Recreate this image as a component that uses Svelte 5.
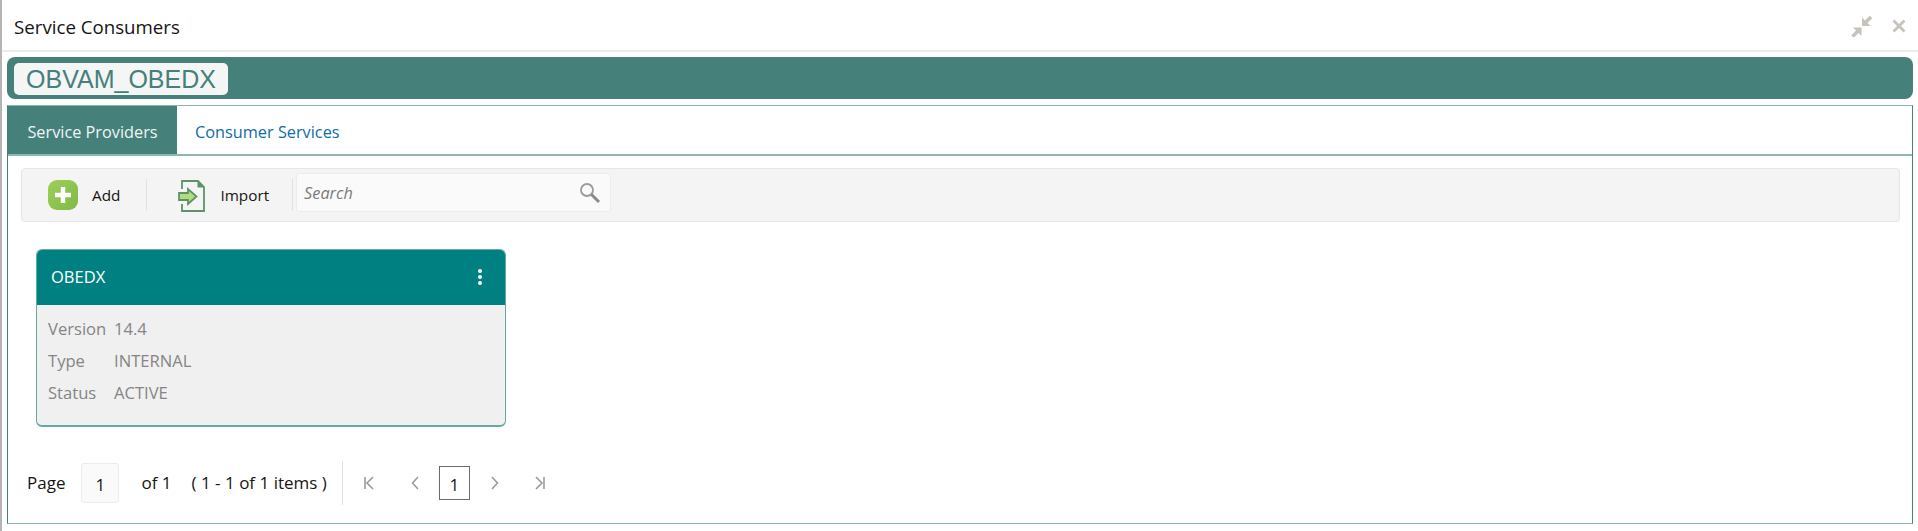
<script lang="ts">
  const details = [
    { label: 'Version', value: '14.4' },
    { label: 'Type', value: 'INTERNAL' },
    { label: 'Status', value: 'ACTIVE' }
  ];
</script>

<div class="page">
  <header class="title-bar">
    <h1>Service Consumers</h1>
    <div class="window-actions">
      <svg width="22" height="22" viewBox="0 0 22 22" aria-label="Minimize">
        <path d="M11 11V2.500L19.500 11Z" fill="#c6c3bb" />
        <path d="M14.500 7.500 20 2" stroke="#c6c3bb" stroke-width="3.600" />
        <path d="M10.500 11.500V20L2 11.500Z" fill="#c6c3bb" transform="translate(0 1)" />
        <path d="M7 16 1.500 21.500" stroke="#c6c3bb" stroke-width="3.600" />
      </svg>
      <svg width="14" height="14" viewBox="0 0 14 14" aria-label="Close">
        <path d="M1.500 1.500 12.500 12.500M12.500 1.500 1.500 12.500" stroke="#c6c3bb" stroke-width="2.800" />
      </svg>
    </div>
  </header>

  <div class="banner"><span class="chip">OBVAM_OBEDX</span></div>

  <section class="panel">
    <nav class="tabs">
      <button type="button" class="tab active">Service Providers</button>
      <button type="button" class="tab">Consumer Services</button>
    </nav>

    <div class="toolbar">
      <button type="button" class="tool add">
        <svg width="30" height="32" viewBox="0 0 30 32">
          <defs>
            <linearGradient id="addFill" x1="0" y1="0" x2="1" y2="1">
              <stop offset="0" stop-color="#9ccf5a" />
              <stop offset="1" stop-color="#7fb944" />
            </linearGradient>
          </defs>
          <rect x="0" y="1" width="30" height="30" rx="9" fill="url(#addFill)" />
          <path d="M15 8V24M7 16H23" stroke="#fff" stroke-width="4.500" />
        </svg>
        <span>Add</span>
      </button>
      <span class="divider"></span>
      <button type="button" class="tool import">
        <svg width="28" height="33" viewBox="0 0 28 33" fill="none">
          <path d="M4 10V2H20L26 8V32H4V25" stroke="#5f9268" stroke-width="1.800" />
          <path d="M19.500 2V8.500H26L19.500 2Z" fill="#5f9268" />
          <path d="M1 14H10V10L18.500 17.500 10 25V21H1Z" fill="#b5dc7c" stroke="#5f9268" stroke-width="1.800" />
        </svg>
        <span>Import</span>
      </button>
      <span class="divider last"></span>
      <label class="search">
        <input type="text" placeholder="Search" />
        <svg width="22" height="22" viewBox="0 0 22 22" fill="none">
          <circle cx="8" cy="8" r="6" stroke="#9a9a9a" stroke-width="1.800" />
          <path d="M12.500 12.500 20 20" stroke="#8a8a8a" stroke-width="3" />
        </svg>
      </label>
    </div>

    <article class="card">
      <div class="card-head">
        <span>OBEDX</span>
        <svg width="6" height="18" viewBox="0 0 6 18" fill="#fff" aria-label="More">
          <circle cx="3" cy="3" r="2" /><circle cx="3" cy="9" r="2" /><circle cx="3" cy="15" r="2" />
        </svg>
      </div>
      <dl class="card-body">
        {#each details as row (row.label)}
          <dt>{row.label}</dt>
          <dd>{row.value}</dd>
        {/each}
      </dl>
    </article>

    <footer class="pager">
      <span class="label">Page</span>
      <span class="page-input">1</span>
      <span class="label">of 1</span>
      <span class="label count">( 1 - 1 of 1 items )</span>
      <span class="pager-divider"></span>
      <div class="pager-nav">
        <svg width="12" height="14" viewBox="0 0 12 14" fill="none" stroke="#9b9b9b" stroke-width="1.600">
          <path d="M2 1V13M10 1 4 7 10 13" />
        </svg>
        <svg width="8" height="14" viewBox="0 0 8 14" fill="none" stroke="#9b9b9b" stroke-width="1.600">
          <path d="M7 1 1.500 7 7 13" />
        </svg>
        <span class="current">1</span>
        <svg width="8" height="14" viewBox="0 0 8 14" fill="none" stroke="#9b9b9b" stroke-width="1.600">
          <path d="M1 1 6.500 7 1 13" />
        </svg>
        <svg width="12" height="14" viewBox="0 0 12 14" fill="none" stroke="#9b9b9b" stroke-width="1.600">
          <path d="M10 1V13M2 1 8 7 2 13" />
        </svg>
      </div>
    </footer>
  </section>
</div>

<style>
  :global(body) {
    margin: 0;
    background: #fff;
  }

  .page {
    height: 531px;
    box-sizing: border-box;
    border-left: 2px solid #b4b4b4;
    font-family: "Open Sans", "Noto Sans", sans-serif;
    color: #161513;
    overflow: hidden;
  }

  .title-bar {
    display: flex;
    align-items: center;
    justify-content: space-between;
    padding: 2px 12px 0 12px;
    height: 48px;
    border-bottom: 2px solid #e9eded;
  }

  h1 {
    margin: 0;
    font-size: 18.700px;
    font-weight: 400;
  }

  .window-actions {
    display: flex;
    align-items: center;
    gap: 19px;
  }

  .banner {
    margin: 5px 5px 0 5px;
    height: 42px;
    box-sizing: border-box;
    padding: 6px 7px;
    background: #45807b;
    border-radius: 8px;
  }

  .chip {
    display: inline-block;
    width: 214px;
    height: 32px;
    line-height: 33px;
    text-align: center;
    background: #f4f5f5;
    border-radius: 5px;
    color: #45807b;
    font-family: "Liberation Sans", Arial, sans-serif;
    font-size: 25px;
  }

  .panel {
    margin: 6px 5px 0 5px;
    height: 419px;
    box-sizing: border-box;
    border: 1px solid #45807b;
    border-top-color: #8fb6b2;
    border-bottom-color: #8fb6b2;
  }

  .tabs {
    display: flex;
    height: 50px;
    box-sizing: border-box;
    border-bottom: 2px solid #8fb6b2;
  }

  .tab {
    border: 0;
    padding: 3px 18px 0;
    background: transparent;
    font: inherit;
    font-size: 16.300px;
    color: #0f6ca8;
  }

  .tab.active {
    width: 169px;
    padding: 3px 0 0;
    background: #45807b;
    color: #eef5f4;
  }

  .toolbar {
    margin: 12px 12px 0 13px;
    height: 54px;
    box-sizing: border-box;
    display: flex;
    align-items: center;
    background: #f4f4f4;
    border: 1px solid #e6e6e6;
    border-radius: 4px;
  }

  .tool {
    display: flex;
    align-items: center;
    border: 0;
    padding: 0;
    background: transparent;
    font: inherit;
    font-size: 15.300px;
    color: #161513;
  }

  .add {
    gap: 14px;
    margin-left: 26px;
  }

  .import {
    gap: 14px;
    margin-left: 31px;
    margin-right: 23px;
  }

  .divider {
    width: 1px;
    height: 32px;
    margin-left: 26px;
    background: #e2e2e2;
  }

  .divider.last {
    margin-left: 0;
  }

  .search {
    display: flex;
    align-items: center;
    justify-content: space-between;
    width: 315px;
    height: 39px;
    box-sizing: border-box;
    margin: 0 0 5px 3px;
    padding: 0 9px 0 7px;
    background: #fafafa;
    border: 1px solid #ececec;
    border-radius: 3px;
  }

  .search input {
    width: 200px;
    border: 0;
    padding: 0;
    background: transparent;
    outline: none;
    font: inherit;
    font-size: 16.300px;
    font-style: italic;
  }

  .search input::placeholder {
    color: #7a7a7a;
    opacity: 1;
  }

  .card {
    width: 470px;
    height: 178px;
    box-sizing: border-box;
    margin: 27px 0 0 28px;
    background: #f0f0f0;
    border: 1px solid #6aa8a6;
    border-bottom-width: 2px;
    border-radius: 6px;
    overflow: hidden;
  }

  .card-head {
    height: 55px;
    display: flex;
    align-items: center;
    justify-content: space-between;
    padding: 0 22px 2px 14px;
    box-sizing: border-box;
    background: #008080;
    color: #fff;
    font-size: 16.500px;
  }

  .card-body {
    margin: 0;
    padding: 7px 11px;
    display: grid;
    grid-template-columns: 66px 1fr;
    grid-auto-rows: 32px;
    align-items: center;
    font-size: 16.600px;
    color: #858585;
  }

  dd {
    margin: 0;
  }

  .pager {
    display: flex;
    align-items: center;
    margin: 35px 0 0 19px;
    height: 42px;
    font-size: 17px;
  }

  .label {
    margin-bottom: 2px;
  }

  .page-input {
    width: 38px;
    height: 40px;
    box-sizing: border-box;
    margin: 0 22px 0 16px;
    display: flex;
    align-items: center;
    justify-content: center;
    background: #fafafa;
    border: 1px solid #ececec;
    border-radius: 3px;
    padding-top: 2px;
  }

  .count {
    margin-left: 20px;
  }

  .pager-divider {
    width: 1px;
    height: 44px;
    margin-left: 15px;
    background: #e2e2e2;
  }

  .pager-nav {
    display: flex;
    align-items: center;
    margin-left: 20px;
  }

  .current {
    width: 31px;
    height: 34px;
    box-sizing: border-box;
    margin: 0 21px 0 20px;
    display: flex;
    align-items: center;
    justify-content: center;
    border: 1px solid #6b6b6b;
    padding-top: 2px;
  }

  .pager-nav svg:first-child {
    margin-right: 36px;
  }

  .pager-nav svg:last-child {
    margin-left: 35px;
  }
</style>
